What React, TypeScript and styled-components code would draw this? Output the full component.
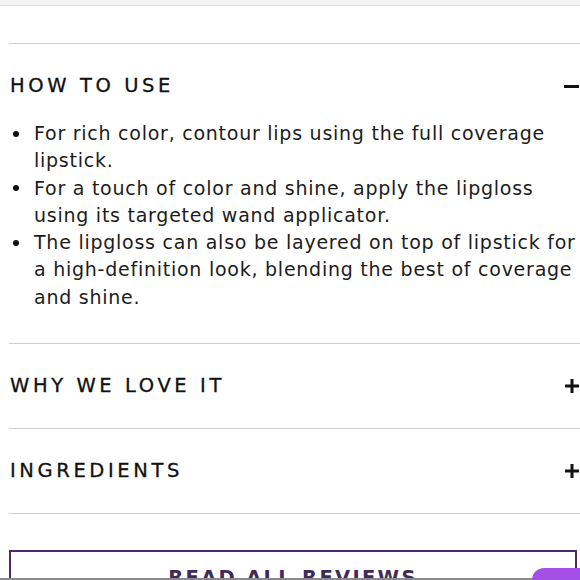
import React from 'react';
import styled, { createGlobalStyle } from 'styled-components';

type Section = {
  title: string;
  open: boolean;
  items?: string[];
};

const sections: Section[] = [
  {
    title: 'How to use',
    open: true,
    items: [
      'For rich color, contour lips using the full coverage lipstick.',
      'For a touch of color and shine, apply the lipgloss using its targeted wand applicator.',
      'The lipgloss can also be layered on top of lipstick for a high-definition look, blending the best of coverage and shine.',
    ],
  },
  { title: 'Why we love it', open: false },
  { title: 'Ingredients', open: false },
];

const GlobalStyle = createGlobalStyle`
  html, body {
    margin: 0;
    padding: 0;
    background: #ffffff;
    overflow: hidden;
  }
  body {
    font-family: "DejaVu Sans", "Noto Sans", sans-serif;
    color: #1a1a1a;
  }
`;

const App: React.FC = () => (
  <>
    <GlobalStyle />
    <Page>
      <TopBar />
      <Content>
        {sections.map((section) => (
          <Accordion key={section.title}>
            <Header>
              <Title>{section.title}</Title>
              <Toggle aria-hidden>
                {section.open ? (
                  <svg width="15" height="15" viewBox="0 0 15 15">
                    <rect x="0" y="6" width="15" height="3" fill="#111" />
                  </svg>
                ) : (
                  <svg width="14" height="14" viewBox="0 0 14 14">
                    <rect x="0" y="5.5" width="14" height="3" fill="#111" />
                    <rect x="5.5" y="0" width="3" height="14" fill="#111" />
                  </svg>
                )}
              </Toggle>
            </Header>
            {section.open && section.items && (
              <List>
                {section.items.map((item) => (
                  <Item key={item}>{item}</Item>
                ))}
              </List>
            )}
          </Accordion>
        ))}
        <Divider />
        <ReviewsButton>Read all reviews</ReviewsButton>
      </Content>
      <BottomBar>
        <ChatTab />
      </BottomBar>
    </Page>
  </>
);

const Page = styled.div`
  position: relative;
  width: 580px;
  height: 580px;
  overflow: hidden;
  background: #ffffff;
`;

const TopBar = styled.div`
  height: 5px;
  background: #f4f4f4;
  border-bottom: 1px solid #dcdcdc;
`;

const Content = styled.div`
  padding: 37px 0 0 9px;
`;

const Accordion = styled.section`
  border-top: 1px solid #cfcfcf;
`;

const Header = styled.div`
  display: flex;
  align-items: center;
  justify-content: space-between;
  height: 84px;
`;

const Title = styled.h3`
  margin: -2px 0 0 1px;
  font-size: 19.5px;
  font-weight: 400;
  letter-spacing: 3.6px;
  text-transform: uppercase;
  color: #111111;
  -webkit-text-stroke: 0.3px #111111;
`;

const Toggle = styled.span`
  display: flex;
  align-items: center;
  margin-right: 1px;
`;

const List = styled.ul`
  margin: -8px 0 0;
  padding: 0 0 32px 25px;
  list-style: none;
`;

const Item = styled.li`
  position: relative;
  font-size: 19px;
  line-height: 27.3px;
  letter-spacing: 0.75px;
  color: #1c1c1c;

  &::before {
    content: '';
    position: absolute;
    left: -21px;
    top: 10.5px;
    width: 6px;
    height: 6px;
    border-radius: 50%;
    background: #111111;
  }
`;

const Divider = styled.div`
  border-top: 1px solid #cfcfcf;
`;

const ReviewsButton = styled.button`
  display: block;
  width: 568px;
  height: 54px;
  margin-top: 36px;
  padding: 0;
  border: 2px solid #4b2a6c;
  background: #ffffff;
  font-family: "DejaVu Sans", "Noto Sans", sans-serif;
  font-size: 19.5px;
  font-weight: 700;
  letter-spacing: 2.3px;
  text-transform: uppercase;
  color: #3f2a5a;
`;

const BottomBar = styled.div`
  position: absolute;
  left: 0;
  right: 0;
  bottom: 0;
  height: 2px;
  background: #8a8a8a;
`;

const ChatTab = styled.div`
  position: absolute;
  right: 0;
  bottom: 0;
  width: 48px;
  height: 12px;
  border-top-left-radius: 14px;
  background: #a44fe6;
`;

export default App;
